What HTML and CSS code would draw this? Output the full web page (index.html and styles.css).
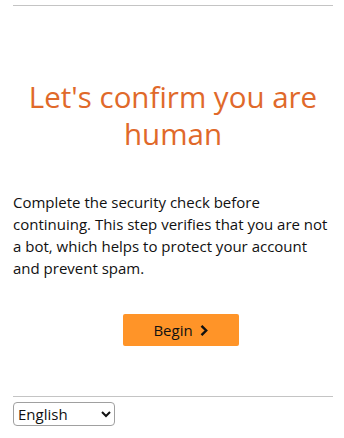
FILE: index.html
```html
<!DOCTYPE html>
<html lang="en">
<head>
    <meta charset="UTF-8">
    <meta name="viewport" content="width=device-width, initial-scale=1.0">
    <title>Security check</title>
    <link rel="stylesheet" href="styles.css">
</head>
<body>

    <div class="page">
        <hr class="rule">

        <div class="content">
            <h1 class="title">Let's confirm you are human</h1>

            <p class="intro">Complete the security check before continuing. This step verifies that you are not a bot, which helps to protect your account and prevent spam.</p>

            <div class="actions">
                <button class="begin" type="button">Begin
                    <svg class="chevron" width="10" height="13" viewBox="0 0 10 13"><path d="M2.5 1.8 L7.2 6.5 L2.5 11.2" fill="none" stroke="#111" stroke-width="2.4"/></svg>
                </button>
            </div>
        </div>

        <hr class="rule">

        <select class="lang">
            <option>English</option>
            <option>Español</option>
            <option>Deutsch</option>
        </select>
    </div>

</body>
</html>
```

FILE: styles.css
```css
body {
    margin: 0;
    font-family: "Open Sans", "Noto Sans", sans-serif;
    color: #111;
    background: #fff;
}

.page {
    padding: 5px 11px 0 13px;
}

.rule {
    margin: 0;
    border: 0;
    border-top: 1px solid #c4c4c4;
}

.content {
    padding: 72px 0 50px;
}

.title {
    margin: 0;
    font-weight: 400;
    font-size: 29.5px;
    line-height: 37px;
    text-align: center;
    color: #e0692a;
}

.intro {
    margin: 39px 0 0;
    font-size: 15px;
    line-height: 22px;
}

.actions {
    display: flex;
    justify-content: center;
    margin-top: 35px;
    padding-left: 16px;
}

.begin {
    display: flex;
    align-items: center;
    justify-content: center;
    gap: 6px;
    width: 116px;
    height: 32px;
    border: 0;
    border-radius: 2px;
    background: #ff9428;
    font-family: inherit;
    font-size: 15px;
    color: #111;
    cursor: pointer;
}

.lang {
    margin-top: 5px;
    width: 102px;
    height: 24px;
    font-family: inherit;
    font-size: 15px;
    color: #111;
    background: #fff;
    border: 1px solid #a0a0a0;
    border-radius: 4px;
}
```
